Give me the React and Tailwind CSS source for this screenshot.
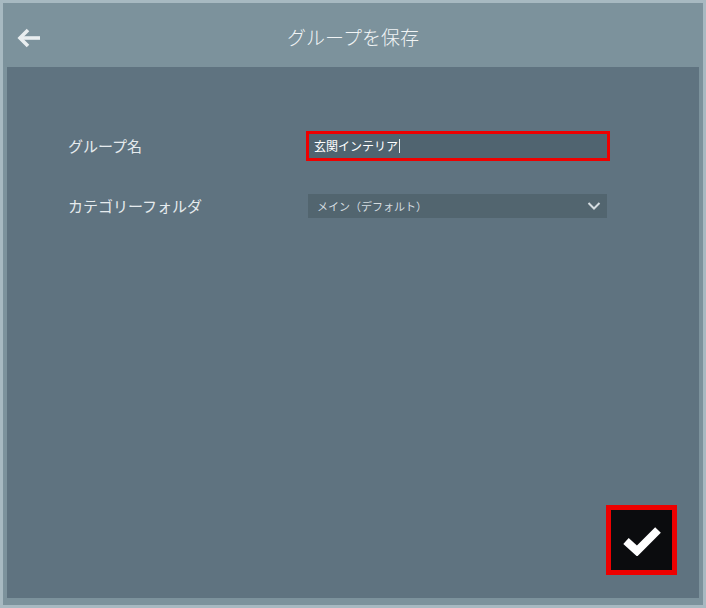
const jp = { fontFamily: '"Noto Sans CJK JP", "Noto Sans", sans-serif' };

export default function App() {
  return (
    <div className="w-[706px] h-[608px] bg-[#a7b9c1] p-[3px]" style={jp}>
      <div className="h-full bg-[#7c929c] flex flex-col pb-[7px]">
        {/* Header */}
        <div className="relative h-[64px] flex items-center justify-center pt-[4px]">
          <button className="absolute left-[12px] top-[22px] w-[28px] h-[26px] flex items-center justify-center">
            <svg width="26" height="20" viewBox="0 0 26 20">
              <path d="M12 2 L4 10 L12 18" fill="none" stroke="#e9eef0" strokeWidth="3.6" strokeLinejoin="miter" />
              <path d="M5 10 H24" stroke="#e9eef0" strokeWidth="3.6" />
            </svg>
          </button>
          <h1 className="text-[19px] text-[#f1f4f5] font-light">グループを保存</h1>
        </div>

        {/* Panel */}
        <div className="flex-1 mx-[4px] bg-[#5f7380] flex flex-col pl-[61px] pr-[20px] pt-[64px] pb-[23px]">
          <div className="flex items-center h-[30px]">
            <div className="w-[238px] text-[15px] font-normal text-[#e6ebee]">グループ名</div>
            <div className="w-[304px] h-[30px] border-[3px] border-[#ee0000] bg-[#506470] flex items-center px-[5px]">
              <span className="text-[12px] font-normal text-white leading-none">玄関インテリア</span>
              <span className="w-px h-[14px] bg-[#e6ebee] ml-[1px]" />
            </div>
          </div>

          <div className="flex items-center h-[24px] mt-[33px]">
            <div className="w-[240px] text-[15px] font-normal text-[#e6ebee]">カテゴリーフォルダ</div>
            <div className="w-[299px] h-[24px] bg-[#52656f] flex items-center justify-between pl-[9px] pr-[6px]">
              <span className="text-[11px] font-normal text-[#d4dce0]">メイン（デフォルト）</span>
              <svg width="14" height="10" viewBox="0 0 14 10">
                <path d="M1.5 2 L7 7.5 L12.5 2" fill="none" stroke="#d4dce0" strokeWidth="2" />
              </svg>
            </div>
          </div>

          <div className="flex-1" />

          <div className="flex justify-end">
            <button className="w-[71px] h-[70px] mr-[2px] border-[5px] border-[#ee0000] bg-[#0b0c0e] flex items-center justify-center">
              <svg width="40" height="32" viewBox="0 0 40 32">
                <path d="M4 17 L15 27 L36 6" fill="none" stroke="#ffffff" strokeWidth="8" strokeLinejoin="miter" />
              </svg>
            </button>
          </div>
        </div>
      </div>
    </div>
  );
}
